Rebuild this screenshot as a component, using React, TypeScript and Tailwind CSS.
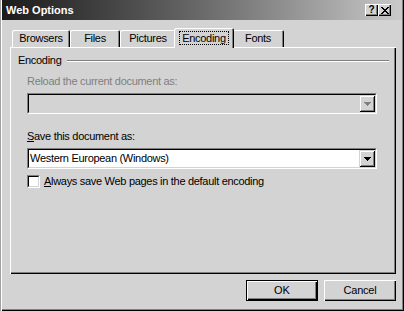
import React from "react";

const font = { fontFamily: '"Liberation Sans", Arial, sans-serif' };

function Arrow({ color }: { color: string }) {
  return (
    <svg width="7" height="4" viewBox="0 0 7 4" shapeRendering="crispEdges">
      <rect x="0" y="0" width="7" height="1" fill={color} />
      <rect x="1" y="1" width="5" height="1" fill={color} />
      <rect x="2" y="2" width="3" height="1" fill={color} />
      <rect x="3" y="3" width="1" height="1" fill={color} />
    </svg>
  );
}

function Combo({ text, disabled }: { text?: string; disabled?: boolean }) {
  return (
    <div className="w-[350px] h-[21px] border border-t-[#808080] border-l-[#808080] border-r-white border-b-white">
      <div
        className={`h-full border border-t-black border-l-black border-r-[#d3d3d3] border-b-[#d3d3d3] flex items-center ${
          disabled ? "bg-[#d3d3d3]" : "bg-white"
        }`}
      >
        <span className="flex-1 pl-[1px] text-[11px] tracking-[-0.3px] text-black leading-[13px]">{text}</span>
        <div className="w-[16px] h-[17px] bg-[#d3d3d3] flex items-center justify-center shadow-[inset_1px_1px_0_#d3d3d3,inset_-1px_-1px_0_#000,inset_2px_2px_0_#fff,inset_-2px_-2px_0_#808080]">
          <Arrow color={disabled ? "#808080" : "#000"} />
        </div>
      </div>
    </div>
  );
}

function Tab({ label, w }: { label: string; w: string }) {
  return (
    <div
      className={`${w} h-[17px] rounded-t-[2px] flex items-start justify-center pt-[2px] text-[11px] tracking-[-0.3px] leading-[13px] text-black shadow-[inset_1px_1px_0_#fff,inset_-1px_0_0_#000,inset_-2px_0_0_#808080]`}
    >
      {label}
    </div>
  );
}

export default function App() {
  return (
    <div
      className="w-[404px] h-[311px] bg-[#d3d3d3] flex flex-col overflow-hidden shadow-[inset_1px_0_0_#a0a0a0,inset_2px_0_0_#fff,inset_-1px_-1px_0_#000,inset_-2px_-2px_0_#808080]"
      style={font}
    >
      {/* Title bar */}
      <div className="mx-[2px] h-[20px] shrink-0 flex items-center pl-[4px] pr-[11px] bg-linear-to-r from-[#1c1c1c] via-[#6a6a6a] to-[#cacaca]">
        <span className="flex-1 text-white font-bold text-[11px] leading-[13px]">Web Options</span>
        <div className="flex">
          <div className="w-[13px] h-[12px] bg-[#d3d3d3] flex items-center justify-center text-[10px] font-bold leading-none text-black shadow-[inset_1px_1px_0_#fff,inset_-1px_-1px_0_#000,inset_-2px_-2px_0_#808080]">
            ?
          </div>
          <div className="w-[13px] h-[12px] bg-[#d3d3d3] flex items-center justify-center shadow-[inset_1px_1px_0_#fff,inset_-1px_-1px_0_#000,inset_-2px_-2px_0_#808080]">
            <svg width="8" height="7" viewBox="0 0 8 7" shapeRendering="crispEdges">
              <path d="M0 0h2v1h-2zM6 0h2v1h-2zM1 1h2v1h-2zM5 1h2v1h-2zM2 2h4v1h-4zM3 3h2v1h-2zM2 4h4v1h-4zM1 5h2v1h-2zM5 5h2v1h-2zM0 6h2v1h-2zM6 6h2v1h-2z" fill="#000" />
            </svg>
          </div>
        </div>
      </div>

      {/* Tabs */}
      <div className="ml-[10px] mr-[8px] mt-[8px] h-[19px] shrink-0 flex items-end pl-[2px] relative z-10">
        <Tab label="Browsers" w="w-[58px]" />
        <Tab label="Files" w="w-[50px]" />
        <Tab label="Pictures" w="w-[56px]" />
        <div className="w-[60px] -mx-[2px] h-[20px] -mb-[1px] bg-[#d3d3d3] rounded-t-[2px] relative z-10 flex items-start justify-center pt-[3px] shadow-[inset_1px_1px_0_#fff,inset_-1px_0_0_#000,inset_-2px_0_0_#808080]">
          <span className="border border-dotted border-black px-[2px] h-[14px] text-[11px] tracking-[-0.3px] leading-[12px] text-black">
            Encoding
          </span>
        </div>
        <Tab label="Fonts" w="w-[52px]" />
      </div>

      {/* Panel */}
      <div className="ml-[10px] mr-[8px] h-[227px] shrink-0 flex flex-col pl-[8px] pr-[7px] pt-[7px] shadow-[inset_1px_1px_0_#fff,inset_-1px_-1px_0_#000,inset_-2px_-2px_0_#808080]">
        <div className="h-[13px] flex items-center">
          <span className="text-[11px] tracking-[-0.3px] leading-[13px] text-black pr-[6px]">Encoding</span>
          <div className="flex-1 h-[2px] border-t border-t-[#808080] border-b border-b-white" />
        </div>
        <div className="pl-[9px] flex flex-col">
          <div className="mt-[8px] h-[13px] text-[11px] tracking-[-0.3px] leading-[13px] text-[#808080]">
            Reload the current document as:
          </div>
          <div className="mt-[5px]">
            <Combo disabled />
          </div>
          <div className="mt-[16px] h-[13px] text-[11px] tracking-[-0.3px] leading-[13px] text-black">
            <span className="underline underline-offset-[1px]">S</span>ave this document as:
          </div>
          <div className="mt-[5px]">
            <Combo text="Western European (Windows)" />
          </div>
          <div className="mt-[6px] flex items-center">
            <div className="w-[13px] h-[13px] border border-t-[#808080] border-l-[#808080] border-r-white border-b-white">
              <div className="w-full h-full bg-white border border-t-black border-l-black border-r-[#d3d3d3] border-b-[#d3d3d3]" />
            </div>
            <span className="ml-[4px] text-[11px] tracking-[-0.3px] leading-[13px] text-black">
              <span className="underline underline-offset-[1px]">A</span>lways save Web pages in the default encoding
            </span>
          </div>
        </div>
      </div>

      {/* Buttons */}
      <div className="mr-[8px] mt-[6px] flex justify-end gap-[6px]">
        <div className="w-[72px] h-[21px] border border-black">
          <div className="w-full h-full flex items-center justify-center text-[11px] leading-[13px] text-black shadow-[inset_1px_1px_0_#fff,inset_-1px_-1px_0_#000,inset_-2px_-2px_0_#808080]">
            OK
          </div>
        </div>
        <div className="w-[72px] h-[21px] flex items-center justify-center text-[11px] tracking-[-0.2px] leading-[13px] text-black shadow-[inset_1px_1px_0_#fff,inset_-1px_-1px_0_#000,inset_-2px_-2px_0_#808080]">
          Cancel
        </div>
      </div>
    </div>
  );
}
